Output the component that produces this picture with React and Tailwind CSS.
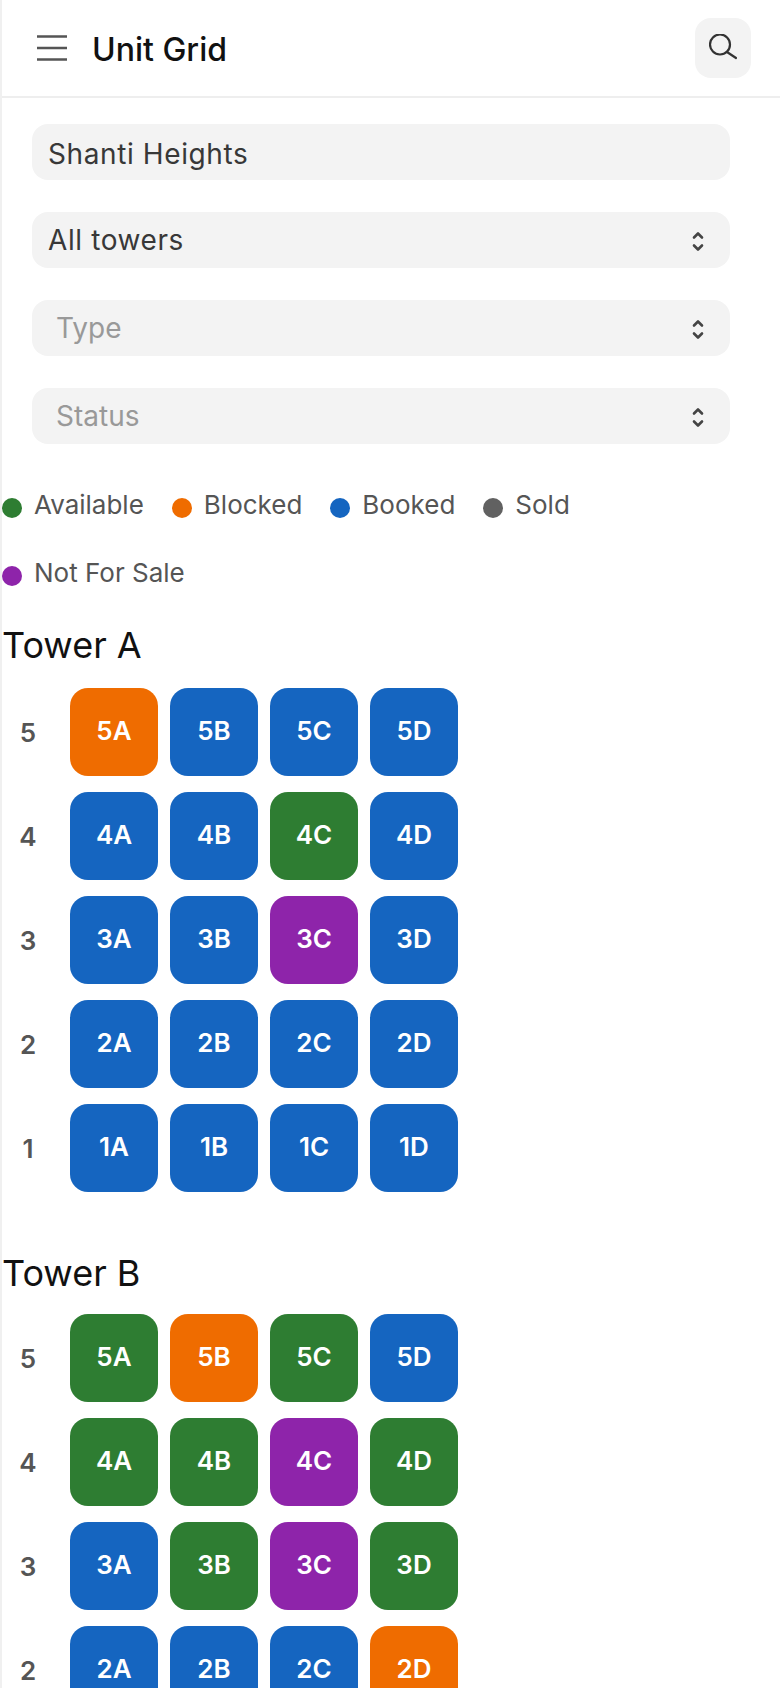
const G = 'bg-[#2e7d32]', O = 'bg-[#ef6c00]', B = 'bg-[#1565c0]', P = 'bg-[#8e24aa]';

const towerA = [
  [5, [O, B, B, B]],
  [4, [B, B, G, B]],
  [3, [B, B, P, B]],
  [2, [B, B, B, B]],
  [1, [B, B, B, B]],
];
const towerB = [
  [5, [G, O, G, B]],
  [4, [G, G, P, G]],
  [3, [B, G, P, G]],
  [2, [B, B, B, O]],
];
const legend = [
  ['Available', G],
  ['Blocked', O],
  ['Booked', B],
  ['Sold', 'bg-[#616161]'],
  ['Not For Sale', P],
];

function Chevrons() {
  return (
    <svg width="14" height="24" viewBox="0 0 14 24" fill="none" stroke="#444" strokeWidth="2.6" strokeLinecap="round" strokeLinejoin="round">
      <path d="M3 9.5 7 5.5 11 9.5" />
      <path d="M3 17.5 7 21.5 11 17.5" />
    </svg>
  );
}

function Select({ label, placeholder }) {
  return (
    <div className={`flex h-14 items-center justify-between rounded-2xl bg-[#f3f3f3] pr-[25px] ${placeholder ? 'pl-6 text-[#999999]' : 'pl-4 tracking-[0.6px] text-[#383838]'}`}>
      <span className="text-[28px]">{label}</span>
      <Chevrons />
    </div>
  );
}

function Tower({ name, rows, className, gridClass }) {
  return (
    <section className={className}>
      <h2 className="text-[36px] font-normal leading-[44px] text-[#111111]">{name}</h2>
      <div className={`flex flex-col gap-4 ${gridClass}`}>
        {rows.map(([floor, colors]) => (
          <div key={floor} className="flex items-center">
            <div className="w-[52px] text-center text-[26px] font-semibold text-[#555555]">{floor}</div>
            <div className="ml-4 flex gap-3">
              {colors.map((c, i) => (
                <div key={i} className={`flex h-[88px] w-[88px] items-center justify-center rounded-[18px] pb-[3px] text-[26px] font-semibold text-white ${c}`}>
                  {floor}{'ABCD'[i]}
                </div>
              ))}
            </div>
          </div>
        ))}
      </div>
    </section>
  );
}

export default function App() {
  return (
    <div className="h-[1688px] overflow-hidden border-l-2 border-[#f0f0f0] bg-white font-['Inter',sans-serif]">
      <header className="flex h-[98px] items-center justify-between border-b-2 border-[#eeeeee] pl-[35px] pr-[29px]">
        <div className="flex items-center gap-[25px]">
          <svg width="30" height="26" viewBox="0 0 30 26" fill="none" stroke="#555" strokeWidth="2.5">
            <path d="M0 1.5H30M0 13H30M0 24.5H30" />
          </svg>
          <h1 className="pt-1 text-[32px] font-medium text-[#111111]">Unit Grid</h1>
        </div>
        <button className="flex h-[60px] w-14 items-center justify-center rounded-2xl bg-[#f3f3f3]">
          <svg width="28" height="28" viewBox="0 0 28 28" fill="none" stroke="#333" strokeWidth="2.2" strokeLinecap="round">
            <circle cx="11" cy="10.5" r="10" />
            <path d="M18 18 27 24" />
          </svg>
        </button>
      </header>

      <div className="flex flex-col gap-8 pl-[30px] pr-[50px] pt-[26px]">
        <div className="flex h-14 items-center rounded-2xl bg-[#f3f3f3] pl-4 pt-1 text-[28px] tracking-[0.6px] text-[#383838]">Shanti Heights</div>
        <Select label="All towers" />
        <Select label="Type" placeholder />
        <Select label="Status" placeholder />
      </div>

      <div className="mt-[43px] flex flex-wrap gap-y-[26px]">
        {legend.map(([label, c]) => (
          <div key={label} className="mr-[28px] flex h-[42px] items-center gap-3">
            <span className={`h-5 w-5 rounded-full ${c}`} />
            <span className="mb-2 text-[26px] text-[#555555]">{label}</span>
          </div>
        ))}
      </div>

      <Tower name="Tower A" rows={towerA} className="mt-[26px]" gridClass="mt-[21px]" />
      <Tower name="Tower B" rows={towerB} className="mt-[59px]" gridClass="mt-[19px]" />
    </div>
  );
}
